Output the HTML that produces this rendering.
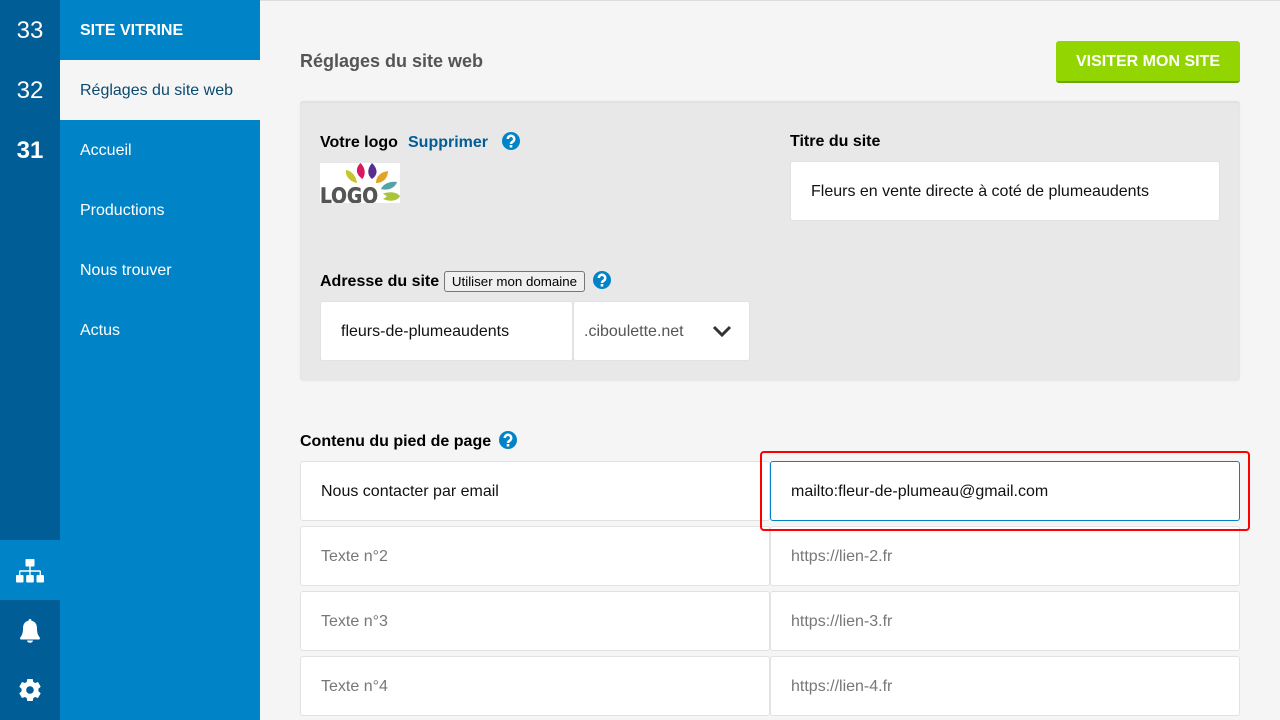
<!DOCTYPE html>
<html lang="fr">
<head>
<meta charset="utf-8">
<title>Réglages du site web</title>
<style>
*{box-sizing:border-box}
html,body{margin:0;padding:0;width:1280px;height:720px;overflow:hidden;background:#f5f5f5;font-family:"Liberation Sans",sans-serif;font-size:16px;color:#000}
.a{position:absolute}
.t{position:absolute;white-space:nowrap;line-height:20px}
#top{left:260px;top:0;width:1020px;height:1px;background:#ddd}
#rail{left:0;top:0;width:60px;height:720px;background:#005d96}
#railact{left:0;top:540px;width:60px;height:60px;background:#0084c7}
.num{position:absolute;left:0;width:60px;text-align:center;font-size:24px;line-height:30px;color:#fff}
#menu{left:60px;top:0;width:200px;height:720px;background:#0084c7}
#act{left:60px;top:60px;width:200px;height:60px;background:#f5f5f5}
.mi{position:absolute;left:80px;color:#fff;line-height:20px;white-space:nowrap}
.panel{left:300px;top:101px;width:940px;height:280px;background:#e8e8e8;border-radius:3px;box-shadow:inset 0 2px 2px rgba(0,0,0,.03),0 0 2px rgba(0,0,0,.04)}
.inp{position:absolute;background:#fff;border:1px solid #e2e2e2;border-radius:3px;height:60px;line-height:60px;padding-left:20px;white-space:nowrap;color:#111}
.ph{color:#777}
.b{font-weight:bold}
.q{position:absolute;width:18px;height:18px}
</style>
</head>
<body>
<div class="a" id="top"></div>
<div class="a" id="rail"></div>
<div class="a" id="railact"></div>
<div class="num" style="top:16px">33</div>
<div class="num" style="top:76px">32</div>
<div class="num b" style="top:136px">31</div>

<svg class="a" style="left:15px;top:559px" width="30" height="24" viewBox="0 0 30 24" fill="#fff">
<rect x="10.500" y="0" width="9" height="7.500" rx="1"/>
<rect x="14.300" y="7" width="1.400" height="6"/>
<path d="M4 17v-4.200a1.500 1.500 0 0 1 1.500-1.500h19a1.500 1.500 0 0 1 1.500 1.500V17h-1.400v-4.300H5.400V17z"/>
<rect x="14.300" y="12" width="1.400" height="5"/>
<rect x="1" y="16" width="7.500" height="7.500" rx="1"/>
<rect x="11.200" y="16" width="7.600" height="7.500" rx="1"/>
<rect x="21.500" y="16" width="7.500" height="7.500" rx="1"/>
</svg>
<svg class="a" style="left:20px;top:618.500px" width="20" height="24" viewBox="0 0 20 24" fill="#fff">
<path d="M10 0c.9 0 1.500.6 1.500 1.700C15.500 2.500 17 5.500 17 9.500c0 4.500 1 6.800 2.700 9 .5.700.3 2-.7 2H1c-1 0-1.200-1.300-.7-2C2 16.300 3 14 3 9.500 3 5.500 4.500 2.500 8.500 1.700 8.500.6 9.100 0 10 0z"/>
<path d="M7 21.500h6c-.3 1.500-1.300 2.300-3 2.300s-2.700-.8-3-2.300z"/>
</svg>
<svg class="a" style="left:18px;top:678px" width="24" height="24" viewBox="0 0 24 24">
<path fill="#fff" fill-rule="evenodd" d="M9.300 1h5.400l.6 3 1.800 1 2.900-1 2.700 4.700-2.300 2v2.600l2.300 2-2.700 4.700-2.900-1-1.800 1-.6 3H9.300l-.6-3-1.800-1-2.900 1-2.700-4.700 2.300-2v-2.600l-2.300-2L4 4l2.900 1 1.800-1zM12 8.200a3.800 3.800 0 1 0 0 7.600 3.800 3.800 0 0 0 0-7.600z"/>
</svg>

<div class="a" id="menu"></div>
<div class="a" id="act"></div>
<div class="mi b" style="top:20.500px">SITE VITRINE</div>
<div class="mi" style="top:81px;color:#0b4a6f">Réglages du site web</div>
<div class="mi" style="top:141px">Accueil</div>
<div class="mi" style="top:201px">Productions</div>
<div class="mi" style="top:261px">Nous trouver</div>
<div class="mi" style="top:321px">Actus</div>

<div class="t b" style="left:300px;top:51px;font-size:18px;color:#555">Réglages du site web</div>
<div class="a b" style="left:1056px;top:41px;width:184px;height:42px;background:#93d500;border-bottom:2px solid #6aa800;border-radius:3px;color:#fff;text-align:center;line-height:41px">VISITER MON SITE</div>

<div class="a panel"></div>
<div class="t b" style="left:320px;top:133px">Votre logo</div>
<div class="t b" style="left:408px;top:133px;color:#005d96">Supprimer</div>
<svg class="q" style="left:502px;top:132px" viewBox="0 0 18 18"><circle cx="9" cy="9" r="9" fill="#0084c7"/><path d="M5.800 7a3.200 3.200 0 1 1 4.900 2.700c-1.100.7-1.700 1.200-1.700 2.300" fill="none" stroke="#fff" stroke-width="2.500"/><rect x="7.700" y="13" width="2.600" height="2.500" fill="#fff"/></svg>

<svg class="a" style="left:320px;top:163px;filter:blur(.3px)" width="80" height="40" viewBox="0 0 80 40">
<rect width="80" height="40" fill="#fff"/>
<path d="M26 7c6 1 10 6 11 13-6-1-12-6-11-13z" fill="#c4c62b"/>
<path d="M40.500 0c4 4 6 10 2 16-6-4-8-10-2-16z" fill="#d7195f"/>
<path d="M52 0c5 5 7 11 0 16-5-4-5-10 0-16z" fill="#5a2d91"/>
<path d="M68 8c0 6-4 12-12 12 0-7 5-11 12-12z" fill="#e0a526"/>
<path d="M77 19c-2 6-9 9-16 7 2-5 9-8 16-7z" fill="#55a3a8"/>
<path d="M80 33c-2 5-10 6-17 3l4-2.500-4-3c6-2 13-2 17 2.500z" fill="#a9c63a"/>
<text x="0" y="40" font-family="DejaVu Sans" font-weight="bold" font-size="21" fill="#555" stroke="#555" stroke-width=".5" textLength="58" lengthAdjust="spacingAndGlyphs">LOGO</text>
</svg>

<div class="t b" style="left:790px;top:132px">Titre du site</div>
<div class="inp" style="left:790px;top:161px;width:430px">Fleurs en vente directe à coté de plumeaudents</div>

<div class="t b" style="left:320px;top:272px">Adresse du site</div>
<div class="a" style="left:444px;top:271px;width:141px;height:21px;border:1px solid #767676;border-radius:3px;background:#efefef;font-size:13.330px;line-height:19px;text-align:center;color:#000;white-space:nowrap">Utiliser mon domaine</div>
<svg class="q" style="left:593px;top:271px" viewBox="0 0 18 18"><circle cx="9" cy="9" r="9" fill="#0084c7"/><path d="M5.800 7a3.200 3.200 0 1 1 4.900 2.700c-1.100.7-1.700 1.200-1.700 2.300" fill="none" stroke="#fff" stroke-width="2.500"/><rect x="7.700" y="13" width="2.600" height="2.500" fill="#fff"/></svg>
<div class="inp" style="left:320px;top:301px;width:253px">fleurs-de-plumeaudents</div>
<div class="inp" style="left:573px;top:301px;width:177px;padding-left:10px;color:#555">.ciboulette.net</div>
<svg class="a" style="left:712px;top:325px" width="20" height="14" viewBox="0 0 20 14"><path d="M2 2l8 8 8-8" fill="none" stroke="#333" stroke-width="3"/></svg>

<div class="t b" style="left:300px;top:432px">Contenu du pied de page</div>
<svg class="q" style="left:499px;top:431px" viewBox="0 0 18 18"><circle cx="9" cy="9" r="9" fill="#0084c7"/><path d="M5.800 7a3.200 3.200 0 1 1 4.900 2.700c-1.100.7-1.700 1.200-1.700 2.300" fill="none" stroke="#fff" stroke-width="2.500"/><rect x="7.700" y="13" width="2.600" height="2.500" fill="#fff"/></svg>

<div class="inp" style="left:300px;top:461px;width:470px">Nous contacter par email</div>
<div class="inp" style="left:770px;top:461px;width:470px;border-color:#0084c7">mailto:fleur-de-plumeau@gmail.com</div>
<div class="inp ph" style="left:300px;top:526px;width:470px">Texte n°2</div>
<div class="inp ph" style="left:770px;top:526px;width:470px">https://lien-2.fr</div>
<div class="inp ph" style="left:300px;top:591px;width:470px">Texte n°3</div>
<div class="inp ph" style="left:770px;top:591px;width:470px">https://lien-3.fr</div>
<div class="inp ph" style="left:300px;top:656px;width:470px">Texte n°4</div>
<div class="inp ph" style="left:770px;top:656px;width:470px">https://lien-4.fr</div>

<div class="a" style="left:760px;top:451px;width:490px;height:80px;border:2px solid #f00;border-radius:4px"></div>
</body>
</html>
